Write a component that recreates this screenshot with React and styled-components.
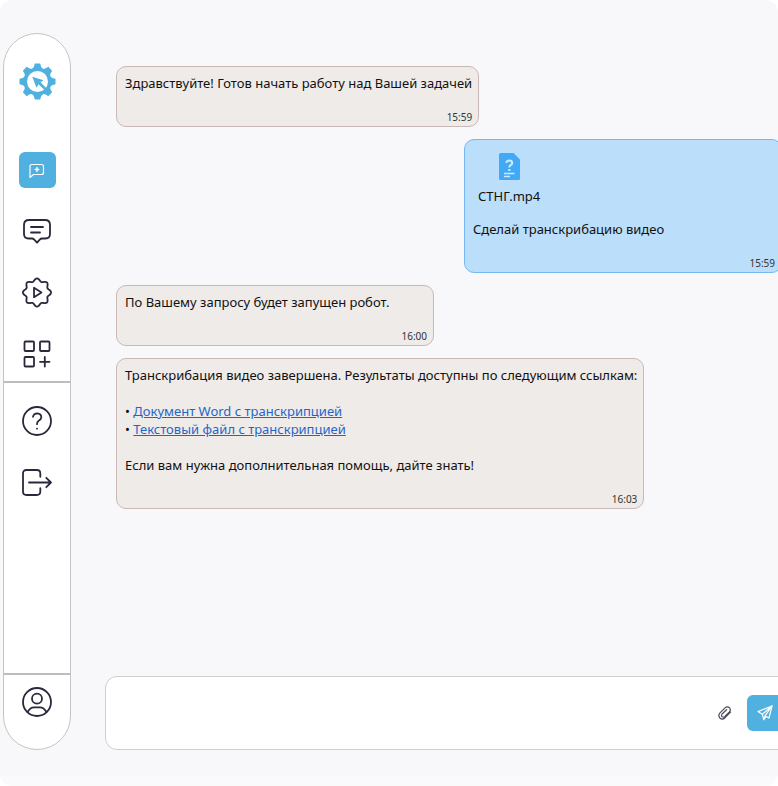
import React from "react";
import styled, { createGlobalStyle } from "styled-components";

const GlobalStyle = createGlobalStyle`
  * {
    box-sizing: border-box;
  }
  body {
    margin: 0;
    background: #fff;
    color: #111;
    font: 13px/18px "Noto Sans", "Open Sans", sans-serif;
  }
`;

const Frame = styled.div`
  display: flex;
  gap: 34px;
  min-height: 100vh;
  padding: 33px 0 36px 3px;
  overflow: hidden;
  border-radius: 12px;
  background: linear-gradient(to top, #fafafa 10px, #f8f8fb 10px);
`;

const Sidebar = styled.nav`
  flex: none;
  display: flex;
  flex-direction: column;
  width: 68px;
  border: 1px solid #c4c4c4;
  border-radius: 34px;
  background: #fff;
`;

const Group = styled.div`
  display: flex;
  flex-direction: column;
  align-items: center;
  gap: 25px;
  flex: ${(props) => (props.$grow ? 1 : "none")};
  padding: ${(props) => props.$padding};

  & + & {
    border-top: 2px solid #bdbdbd;
  }
`;

const Logo = styled.a`
  display: flex;
  margin-bottom: 27px;
`;

const NavButton = styled.button`
  display: flex;
  align-items: center;
  justify-content: center;
  width: 37px;
  height: 36px;
  padding: 0;
  border: 0;
  border-radius: 6px;
  background: ${(props) => (props.$active ? "#50b0df" : "transparent")};
  color: ${(props) => (props.$active ? "#fff" : "#29283d")};
  cursor: pointer;
`;

const Chat = styled.main`
  flex: 1;
  display: flex;
  flex-direction: column;
  min-width: 0;
`;

const Messages = styled.div`
  flex: 1;
  display: flex;
  flex-direction: column;
  align-items: flex-start;
  gap: 12px;
  margin-right: -4px;
  padding: 33px 0 12px 11px;
`;

const Bubble = styled.article`
  display: flex;
  flex-direction: column;
  min-width: 318px;
  align-self: ${(props) => (props.$own ? "flex-end" : "flex-start")};
  padding: 7px 6px 2px 8px;
  border: 1px solid ${(props) => (props.$own ? "#74b9f3" : "#c9b8b5")};
  border-radius: 10px;
  background: ${(props) => (props.$own ? "#bbdefb" : "#efebe9")};
`;

const Text = styled.p`
  margin: 0;
`;

const Links = styled.ul`
  margin: 18px 0;
  padding: 0;
  list-style: none;

  li::before {
    content: "• ";
  }
  a {
    color: #1f66c7;
  }
`;

const Time = styled.time`
  align-self: flex-end;
  margin-top: 18px;
  color: #333;
  font-size: 10px;
  line-height: 14px;
`;

const Attachment = styled.div`
  display: flex;
  flex-direction: column;
  align-items: center;
  align-self: flex-start;
  gap: 7px;
  padding: 6px 5px 15px;
`;

const Composer = styled.form`
  display: flex;
  align-items: center;
  gap: 14px;
  height: 74px;
  margin-right: -16px;
  padding: 0 10px 0 16px;
  border: 1px solid #cfcfcf;
  border-radius: 12px;
  background: #fff;
`;

const Input = styled.input`
  flex: 1;
  min-width: 0;
  border: 0;
  outline: 0;
  background: transparent;
  font: inherit;
`;

const IconButton = styled.button`
  display: flex;
  padding: 0;
  border: 0;
  background: transparent;
  color: #4b4a58;
`;

const SendButton = styled.button`
  display: flex;
  align-items: center;
  justify-content: center;
  width: 36px;
  height: 36px;
  padding: 0;
  border: 0;
  border-radius: 6px;
  background: #50b0df;
  color: #fff;
`;

const Icon = ({ size = 32, width = 1.8, children }) => (
  <svg
    width={size}
    height={size}
    viewBox={`0 0 ${size} ${size}`}
    fill="none"
    stroke="currentColor"
    strokeWidth={width}
    strokeLinecap="round"
    strokeLinejoin="round"
    aria-hidden="true"
  >
    {children}
  </svg>
);

const LogoIcon = () => (
  <svg width="37" height="37" viewBox="-18.5 -18.5 37 37" aria-hidden="true">
    <g fill="#50b0df">
      {[0, 45, 90, 135, 180, 225, 270, 315].map((angle) => (
        <path
          key={angle}
          transform={`rotate(${angle})`}
          d="M-6 -12Q-3 -14 -2.7 -18H2.7Q3 -14 6 -12Z"
        />
      ))}
      <circle r="13.6" />
    </g>
    <circle r="10.5" fill="#fff" />
    <path d="M-5.2 -4.8L6 -1.2L3 0.8L9.5 7.2L7.6 9.1L1 2.8L-1 6.3Z" fill="#50b0df" />
  </svg>
);

// eight soft lobes around a circle
const lobes = Array.from({ length: 96 }, (_, i) => {
  const a = (i * Math.PI) / 48;
  const r = 12.7 + 1.4 * Math.cos(a * 8);
  return `${(16 + r * Math.sin(a)).toFixed(2)} ${(16.5 - r * Math.cos(a)).toFixed(2)}`;
}).join("L");

const NewChatIcon = () => (
  <Icon size={16} width={1.2}>
    <path d="M1 15.5V4.5Q1 2.5 3 2.5H12.5Q14.5 2.5 14.5 4.5V10.5Q14.5 12.5 12.5 12.5H4.5Z" />
    <path d="M8 5.8V9.2M6.3 7.5H9.7" strokeWidth="1.6" />
  </Icon>
);

const MessageIcon = () => (
  <Icon>
    <path d="M8 5H24Q29 5 29 10V19Q29 23.5 24.5 23.5H21Q19.8 23.5 19 24.4L16 27.7L13 24.4Q12.2 23.5 11 23.5H7.5Q3 23.5 3 19V10Q3 5 8 5Z" />
    <path d="M10 12H22M10 17.5H19" />
  </Icon>
);

const RobotIcon = () => (
  <Icon>
    <path d={`M${lobes}Z`} />
    <path d="M13 11.8V21.2L20.5 16.5Z" />
  </Icon>
);

const AppsIcon = () => (
  <Icon>
    <rect x="3.5" y="4.5" width="9.5" height="9.5" rx="1" />
    <rect x="19" y="4.5" width="9.5" height="9.5" rx="1" />
    <rect x="3.5" y="20" width="9.5" height="9.5" rx="1" />
    <path d="M23.8 20V29.5M19 24.8H28.5" />
  </Icon>
);

const HelpIcon = () => (
  <Icon>
    <circle cx="16" cy="16" r="14" />
    <path d="M12 11.8Q12.7 8.3 16.3 8.3Q20.5 8.7 20.3 12.3Q20 14.5 17.7 15.7Q16 16.8 16 19.2" />
    <path d="M16 23.6V23.7" />
  </Icon>
);

const ExitIcon = () => (
  <Icon>
    <path d="M19.3 10.8V7.5Q19.3 4 15.8 4H5.5Q2 4 2 7.5V25.5Q2 29 5.5 29H15.8Q19.3 29 19.3 25.5V22.2" />
    <path d="M8 16.5H30M25.3 11.8L30 16.5L25.3 21.2" />
  </Icon>
);

const UserIcon = () => (
  <Icon>
    <circle cx="16" cy="16" r="14" />
    <circle cx="16" cy="12.7" r="5" />
    <path d="M6.5 26Q9.2 21.3 13 21.3H19Q22.8 21.3 25.5 26" />
  </Icon>
);

const FileIcon = () => (
  <svg width="21" height="27" viewBox="0 0 21 27" aria-hidden="true">
    <path d="M1.5 0H14.5L21 6.5V25.5Q21 27 19.5 27H1.5Q0 27 0 25.5V1.5Q0 0 1.5 0Z" fill="#42a9f5" />
    <g fill="none" stroke="#cfe9fd">
      <path d="M7.5 10V9.5Q7.7 7.5 10.5 7.5Q13.4 7.6 13.2 10Q13 11.4 11.6 12.2Q10.3 13 10.3 14.4" strokeWidth="2" />
      <path d="M9.2 17H11.4" strokeWidth="2" />
      <path d="M5 20.5H15.5M5 23.5H11" strokeWidth="1.4" />
    </g>
  </svg>
);

const ClipIcon = () => (
  <Icon size={16} width={1.2}>
    <path d="M13.5 7.1L8.1 12.7Q5.2 15.2 2.9 13Q0.7 10.6 3 7.9L8 2.9Q10.3 0.9 12.4 2.7Q14.3 4.7 12.4 6.9L7.6 11.6Q6.2 12.7 5 11.6Q4 10.4 5.1 9L9.6 4.7" />
  </Icon>
);

const SendIcon = () => (
  <Icon size={16} width={1.2}>
    <path d="M15 1L1 6.6L5.3 9.2L6.7 14.6L9.1 11.5L12 13Z" />
    <path d="M15 1L5.3 9.2M15 1L8 10.9L6.7 14.6M8 10.9L9.1 11.5" />
  </Icon>
);

const Message = ({ time, own, children }) => (
  <Bubble $own={own}>
    {children}
    <Time>{time}</Time>
  </Bubble>
);

const App = () => {
  return (
    <>
      <GlobalStyle />
      <Frame>
        <Sidebar>
          <Group $padding="29px 0 10px">
            <Logo href="#" aria-label="Главная">
              <LogoIcon />
            </Logo>
            <NavButton $active aria-label="Новый чат">
              <NewChatIcon />
            </NavButton>
            <NavButton aria-label="Сообщения">
              <MessageIcon />
            </NavButton>
            <NavButton aria-label="Роботы">
              <RobotIcon />
            </NavButton>
            <NavButton aria-label="Приложения">
              <AppsIcon />
            </NavButton>
          </Group>
          <Group $grow $padding="20px 0">
            <NavButton aria-label="Помощь">
              <HelpIcon />
            </NavButton>
            <NavButton aria-label="Выход">
              <ExitIcon />
            </NavButton>
          </Group>
          <Group $padding="9px 0 29px">
            <NavButton aria-label="Профиль">
              <UserIcon />
            </NavButton>
          </Group>
        </Sidebar>

        <Chat>
          <Messages>
            <Message time="15:59">
              <Text>Здравствуйте! Готов начать работу над Вашей задачей</Text>
            </Message>
            <Message time="15:59" own>
              <Attachment>
                <FileIcon />
                <span>СТНГ.mp4</span>
              </Attachment>
              <Text>Сделай транскрибацию видео</Text>
            </Message>
            <Message time="16:00">
              <Text>По Вашему запросу будет запущен робот.</Text>
            </Message>
            <Message time="16:03">
              <Text>
                Транскрибация видео завершена. Результаты доступны по следующим
                ссылкам:
              </Text>
              <Links>
                <li>
                  <a href="#word">Документ Word с транскрипцией</a>
                </li>
                <li>
                  <a href="#text">Текстовый файл с транскрипцией</a>
                </li>
              </Links>
              <Text>Если вам нужна дополнительная помощь, дайте знать!</Text>
            </Message>
          </Messages>
          <Composer onSubmit={(e) => e.preventDefault()}>
            <Input type="text" aria-label="Сообщение" />
            <IconButton type="button" aria-label="Прикрепить файл">
              <ClipIcon />
            </IconButton>
            <SendButton type="submit" aria-label="Отправить">
              <SendIcon />
            </SendButton>
          </Composer>
        </Chat>
      </Frame>
    </>
  );
};

export default App;
